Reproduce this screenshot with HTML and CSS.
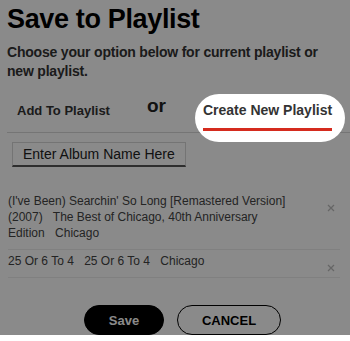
FILE: index.html
```html
<!DOCTYPE html>
<html lang="en">
<head>
    <meta charset="UTF-8">
    <meta name="viewport" content="width=device-width, initial-scale=1.0">
    <title>Save to Playlist</title>
    <link rel="stylesheet" href="styles.css">
</head>
<body>
    <div class="sheet">
        <h1 class="title">Save to Playlist</h1>
        <p class="intro">Choose your option below for current playlist or new playlist.</p>

        <div class="tabs">
            <div class="tab">Add To Playlist</div>
            <span class="tab-or">or</span>
            <div class="tab tab-active"><span class="tab-label">Create New Playlist</span></div>
        </div>

        <input class="album-name" type="text" placeholder="Enter Album Name Here">

        <ul class="songs">
            <li class="song">
                <div class="song-info">
                    <span class="song-field">(I've Been) Searchin' So Long [Remastered Version] (2007)</span>
                    <span class="song-field">The Best of Chicago, 40th Anniversary Edition</span>
                    <span class="song-field">Chicago</span>
                </div>
                <button class="song-remove" aria-label="Remove">
                    <svg width="8" height="8" viewBox="0 0 8 8"><path d="M1 1L7 7M7 1L1 7" stroke="#bdbdbd" stroke-width="1.3" fill="none"/></svg>
                </button>
            </li>
            <li class="song">
                <div class="song-info">
                    <span class="song-field">25 Or 6 To 4</span>
                    <span class="song-field">25 Or 6 To 4</span>
                    <span class="song-field">Chicago</span>
                </div>
                <button class="song-remove" aria-label="Remove">
                    <svg width="8" height="8" viewBox="0 0 8 8"><path d="M1 1L7 7M7 1L1 7" stroke="#bdbdbd" stroke-width="1.3" fill="none"/></svg>
                </button>
            </li>
        </ul>

        <div class="actions">
            <button class="btn btn-save">Save</button>
            <button class="btn btn-cancel">CANCEL</button>
        </div>
    </div>
</body>
</html>
```

FILE: styles.css
```css
body {
    margin: 0;
    background: #fff;
    font-family: "Liberation Sans", Arial, sans-serif;
    color: #333;
    overflow: hidden;
}

.sheet {
    padding: 3px 7px 0;
}

.title {
    margin: 0;
    font-size: 27px;
    line-height: 32px;
    font-weight: 700;
    letter-spacing: -0.35px;
    color: #000;
}

.intro {
    margin: 8px 0 0;
    font-size: 14px;
    line-height: 19px;
    font-weight: 700;
    letter-spacing: -0.2px;
    color: #333;
}

/* tabs */
.tabs {
    display: flex;
    align-items: flex-start;
    margin: 9px -7px 0 0;
    height: 42px;
    border-bottom: 1px solid #d9d9d9;
}

.tab {
    margin-left: 10px;
    padding-top: 12.5px;
    font-size: 13px;
    line-height: 16px;
    font-weight: 700;
    color: #333;
}

.tab-or {
    margin-left: 37px;
    padding-top: 5px;
    font-size: 19px;
    line-height: 22px;
    font-weight: 700;
    color: #222;
}

.tab-active {
    position: relative;
    z-index: 1;
    margin-left: 37px;
    padding-top: 12px;
    font-size: 14px;
}

/* spotlight over the active tab */
.tab-active::before {
    content: "";
    position: absolute;
    top: 4px;
    left: -8px;
    right: -13px;
    bottom: -11px;
    background: #fff;
    border-radius: 24px;
    box-shadow: 0 0 0 2000px rgba(0,0,0,0.46);
    z-index: -1;
}

.tab-label {
    display: block;
    padding-bottom: 10px;
    border-bottom: 3px solid #d52b1e;
}

.album-name {
    display: block;
    margin: 9px 0 0 5px;
    width: 174px;
    height: 25px;
    box-sizing: border-box;
    padding: 0 0 0 10px;
    border: 1px solid #d6d6d6;
    border-bottom: 2px solid #555;
    background: transparent;
    font-family: "Liberation Sans", Arial, sans-serif;
    font-size: 14px;
    color: #222;
    outline: none;
}

.album-name::placeholder {
    color: #222;
    opacity: 1;
}

/* song list */
.songs {
    list-style: none;
    margin: 23px 3px 0 1px;
    padding: 0;
}

.song {
    display: flex;
    align-items: flex-start;
    padding: 3px 0 8px;
    border-bottom: 1px solid #ececec;
}

.song-info {
    flex: 1;
    margin-right: 27px;
    font-size: 12px;
    line-height: 16px;
    color: #444;
}

.song-field {
    margin-right: 7px;
}

.song-remove {
    width: 18px;
    height: 10px;
    margin: 10px 0 -10px;
    padding: 0;
    border: none;
    background: none;
    display: flex;
    align-items: center;
    justify-content: center;
    cursor: pointer;
}

.actions {
    display: flex;
    justify-content: center;
    gap: 13px;
    margin-top: 27px;
    padding-left: 15px;
}

.btn {
    height: 30px;
    box-sizing: border-box;
    border-radius: 15px;
    border: 1px solid #000;
    font-family: "Liberation Sans", Arial, sans-serif;
    font-size: 13px;
    font-weight: 700;
    cursor: pointer;
}

.btn-save {
    width: 80px;
    background: #000;
    color: #fff;
}

.btn-cancel {
    width: 104px;
    background: #fff;
    color: #000;
}
```
